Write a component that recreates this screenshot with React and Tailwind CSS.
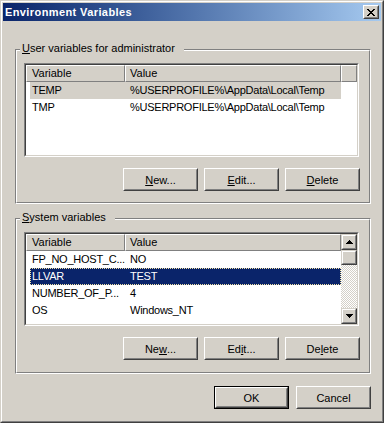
import React from "react";

const raisedOuter =
  "border border-t-white border-l-white border-r-[#404040] border-b-[#404040]";
const raisedInner =
  "border border-t-[#d4d0c8] border-l-[#d4d0c8] border-r-[#808080] border-b-[#808080]";
const sbOuter =
  "border border-t-[#d4d0c8] border-l-[#d4d0c8] border-r-[#404040] border-b-[#404040]";
const sbInner =
  "border border-t-white border-l-white border-r-[#808080] border-b-[#808080]";

function Button({ children, isDefault }) {
  return (
    <div className={`w-[75px] h-[23px] ${isDefault ? "border border-black" : ""}`}>
      <div className={`h-full w-full ${raisedOuter}`}>
        <div
          className={`h-full w-full ${raisedInner} flex items-center justify-center leading-[14px]`}
        >
          {children}
        </div>
      </div>
    </div>
  );
}

function U({ children }) {
  return <span className="underline decoration-1 underline-offset-[1px]">{children}</span>;
}

function Group({ label, children, className = "", pb }) {
  return (
    <div
      className={`relative ml-[12px] w-[356px] border border-t-[#808080] border-l-[#808080] border-r-white border-b-white ${className}`}
    >
      <div
        className={`border border-t-white border-l-white border-r-[#808080] border-b-[#808080] pt-[12px] pl-[7px] pr-[9px] ${pb}`}
      >
        {children}
      </div>
      <div className="absolute left-[4px] top-[-9px] bg-[#d4d0c8] pl-[2px] pr-[9px] leading-[14px] whitespace-nowrap">
        {label}
      </div>
    </div>
  );
}

function Sunken({ children }) {
  return (
    <div className="w-[335px] h-[94px] border border-t-[#808080] border-l-[#808080] border-r-white border-b-white">
      <div className="h-full w-full border border-t-[#404040] border-l-[#404040] border-r-[#d4d0c8] border-b-[#d4d0c8] bg-white overflow-hidden">
        {children}
      </div>
    </div>
  );
}

const hdrCell =
  "h-[17px] border border-t-white border-l-white border-r-[#808080] border-b-[#808080] bg-[#d4d0c8] leading-[15px] whitespace-nowrap";

function Header({ filler }) {
  return (
    <div className="flex h-[17px]">
      <div className={`${hdrCell} w-[99px] pl-[5px]`}>Variable</div>
      <div className={`${hdrCell} w-[216px] pl-[4px]`}>Value</div>
      {filler && <div className={`${hdrCell} flex-1`} />}
    </div>
  );
}

function Row({ name, value, sel }) {
  let cls = "";
  if (sel === "inactive") cls = "bg-[#d4d0c8]";
  if (sel === "active")
    cls =
      "bg-[#0a246a] text-white outline outline-1 outline-dotted outline-[#f2e2a4] -outline-offset-1";
  return (
    <div
      className={`ml-[4px] w-[311px] h-[17px] flex leading-[17px] whitespace-nowrap tracking-[-0.25px] ${cls}`}
    >
      <div className="w-[95px] pl-[2px]">{name}</div>
      <div className="pl-[5px]">{value}</div>
    </div>
  );
}

function Arrow({ up }) {
  return (
    <svg width="7" height="4" viewBox="0 0 7 4" shapeRendering="crispEdges">
      {up ? (
        <g fill="#000">
          <rect x="3" y="0" width="1" height="1" />
          <rect x="2" y="1" width="3" height="1" />
          <rect x="1" y="2" width="5" height="1" />
          <rect x="0" y="3" width="7" height="1" />
        </g>
      ) : (
        <g fill="#000">
          <rect x="0" y="0" width="7" height="1" />
          <rect x="1" y="1" width="5" height="1" />
          <rect x="2" y="2" width="3" height="1" />
          <rect x="3" y="3" width="1" height="1" />
        </g>
      )}
    </svg>
  );
}

function SbButton({ up }) {
  return (
    <div className={`w-[16px] h-[16px] ${sbOuter}`}>
      <div className={`w-full h-full ${sbInner} bg-[#d4d0c8] flex items-center justify-center`}>
        <Arrow up={up} />
      </div>
    </div>
  );
}

function CloseX() {
  const px = [
    [0, 0], [1, 0], [6, 0], [7, 0],
    [1, 1], [2, 1], [5, 1], [6, 1],
    [2, 2], [3, 2], [4, 2], [5, 2],
    [3, 3], [4, 3],
    [2, 4], [3, 4], [4, 4], [5, 4],
    [1, 5], [2, 5], [5, 5], [6, 5],
    [0, 6], [1, 6], [6, 6], [7, 6],
  ];
  return (
    <svg width="8" height="7" viewBox="0 0 8 7" shapeRendering="crispEdges">
      {px.map(([x, y], i) => (
        <rect key={i} x={x} y={y} width="1" height="1" fill="#000" />
      ))}
    </svg>
  );
}

export default function App() {
  return (
    <div className="w-[384px] h-[423px] bg-[#d4d0c8] border border-t-[#d4d0c8] border-l-[#d4d0c8] border-r-[#404040] border-b-[#404040] font-['Liberation_Sans',Arial,sans-serif] text-[11px] text-black">
      <div className="h-full border border-t-white border-l-white border-r-[#808080] border-b-[#808080] p-px flex flex-col">
        {/* Title bar */}
        <div className="h-[18px] bg-linear-to-r from-[#0a246a] to-[#a6caf0] flex items-center pl-[2px] pr-[2px]">
          <span className="font-bold text-white tracking-[0.4px] leading-[18px]">
            Environment Variables
          </span>
          <div className={`ml-auto w-[16px] h-[14px] ${raisedOuter}`}>
            <div className={`w-full h-full ${raisedInner} bg-[#d4d0c8] flex items-center justify-center`}>
              <CloseX />
            </div>
          </div>
        </div>

        {/* User variables */}
        <Group
          className="mt-[28px]"
          pb="pb-[11px]"
          label={
            <>
              <U>U</U>ser variables for administrator
            </>
          }
        >
          <Sunken>
            <Header filler />
            <Row name="TEMP" value="%USERPROFILE%\AppData\Local\Temp" sel="inactive" />
            <Row name="TMP" value="%USERPROFILE%\AppData\Local\Temp" />
          </Sunken>
          <div className="mt-[11px] flex justify-end gap-[6px]">
            <Button>
              <U>N</U>ew...
            </Button>
            <Button>
              <U>E</U>dit...
            </Button>
            <Button>
              <U>D</U>elete
            </Button>
          </div>
        </Group>

        {/* System variables */}
        <Group
          className="mt-[14px]"
          pb="pb-[12px]"
          label={
            <>
              <U>S</U>ystem variables
            </>
          }
        >
          <Sunken>
            <div className="flex h-full">
              <div className="w-[315px] h-full overflow-hidden">
                <Header />
                <Row name="FP_NO_HOST_C..." value="NO" />
                <Row name="LLVAR" value="TEST" sel="active" />
                <Row name="NUMBER_OF_P..." value="4" />
                <Row name="OS" value="Windows_NT" />
              </div>
              <div className="w-[16px] h-full flex flex-col">
                <SbButton up />
                <div className="flex-1 bg-[image:repeating-conic-gradient(#d4d0c8_0%_25%,#ffffff_0%_50%)] bg-[length:2px_2px]">
                  <div className={`w-[16px] h-[15px] ${sbOuter}`}>
                    <div className={`w-full h-full ${sbInner} bg-[#d4d0c8]`} />
                  </div>
                </div>
                <SbButton />
              </div>
            </div>
          </Sunken>
          <div className="mt-[11px] flex justify-end gap-[6px]">
            <Button>
              Ne<U>w</U>...
            </Button>
            <Button>
              Ed<U>i</U>t...
            </Button>
            <Button>
              De<U>l</U>ete
            </Button>
          </div>
        </Group>

        {/* OK / Cancel */}
        <div className="mt-[12px] flex justify-end gap-[7px] pr-[10px]">
          <Button isDefault>OK</Button>
          <Button>Cancel</Button>
        </div>
      </div>
    </div>
  );
}
